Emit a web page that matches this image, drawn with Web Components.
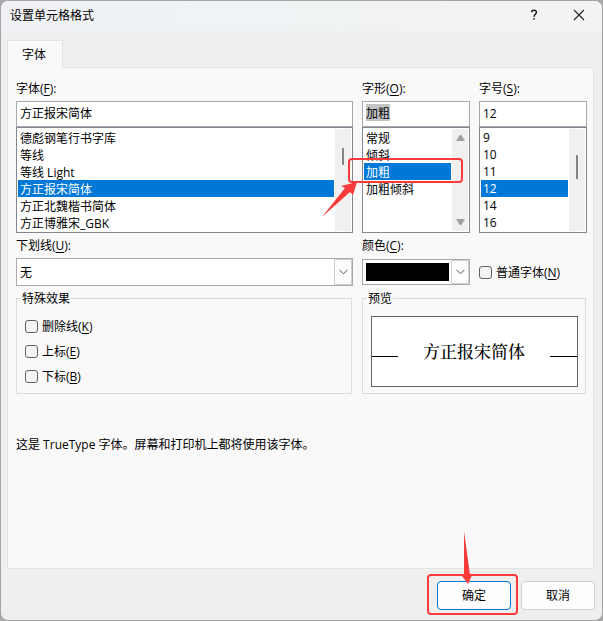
<!DOCTYPE html>
<html lang="zh-CN">
<head>
<meta charset="utf-8">
<title>设置单元格格式</title>
<style>
html, body { margin: 0; height: 100%; }
body { background: #a9a9a9; font: 12px/17px "Open Sans", "Noto Sans CJK SC", sans-serif; color: #000; }
.wide { grid-column: span 2; }
.note { grid-column: 1 / -1; margin: 38px 0 0; }
u { text-underline-offset: 2px; }
</style>
</head>
<body>
<dialog-window heading="设置单元格格式">
  <tab-panel heading="字体">
    <list-field value="方正报宋简体" options="德彪钢笔行书字库|等线|等线 Light|方正报宋简体|方正北魏楷书简体|方正博雅宋_GBK" thumb="19 17">字体(<u>F</u>):</list-field>
    <list-field value="加粗" options="常规|倾斜|加粗|加粗倾斜" arrows highlighted>字形(<u>O</u>):
      <call-out slot="mark" kind="row"></call-out>
    </list-field>
    <list-field value="12" options="9|10|11|12|14|16" thumb="26 24">字号(<u>S</u>):</list-field>
    <combo-field value="无">下划线(<u>U</u>):</combo-field>
    <combo-field value="" swatch>颜色(<u>C</u>):</combo-field>
    <check-field inline>普通字体(<u>N</u>)</check-field>
    <group-box heading="特殊效果">
      <check-field>删除线(<u>K</u>)</check-field>
      <check-field>上标(<u>E</u>)</check-field>
      <check-field>下标(<u>B</u>)</check-field>
    </group-box>
    <group-box heading="预览" class="wide" preview><font-preview>方正报宋简体</font-preview></group-box>
    <p class="note">这是 TrueType 字体。屏幕和打印机上都将使用该字体。</p>
  </tab-panel>
  <push-button slot="actions" primary>确定<call-out slot="mark" kind="button"></call-out></push-button>
  <push-button slot="actions">取消</push-button>
</dialog-window>

<script>
const base = '*{box-sizing:border-box}input,select,button{font:inherit;color:inherit;margin:0}';
function define(name, render, after) {
  customElements.define(name, class extends HTMLElement {
    connectedCallback() {
      if (this.shadowRoot) return;
      const root = this.attachShadow({ mode: 'open' });
      root.innerHTML = '<style>' + base + '</style>' + render(this);
      if (after) after(root, this);
    }
  });
}

define('dialog-window', el => `<style>
:host{display:flex;flex-direction:column;box-sizing:border-box;min-height:100vh;border:1px solid #a3a3a3;border-radius:8px;background:#efefef;overflow:hidden}
header{display:flex;align-items:center;height:30px;padding:0 1px 2px 9px;background:linear-gradient(90deg,#f0f1f5,#eef3f6 35%,#f1f3f2 65%,#f3f3f3)}
h1{flex:1;margin:0;font:inherit}
header button{width:45px;height:28px;padding:0;border:0;background:none;display:grid;place-items:center}
main{flex:1;display:flex;margin:9px 8px 0 6px}
::slotted(tab-panel){flex:1}
footer{display:flex;justify-content:flex-end;gap:10px;padding:12px 7px 10px}
</style>
<header><h1>${el.getAttribute('heading')}</h1>
<button aria-label="帮助"><svg width="10" height="12" viewBox="0 0 10 12" fill="none" stroke="#111" stroke-width="1.4"><path d="M2.6 3.2C2.7 .7 7.4.6 7.4 3.2c0 2-2.4 2.2-2.4 4.6M5 9.2v1.6"/></svg></button>
<button aria-label="关闭"><svg width="12" height="12" viewBox="0 0 12 12" stroke="#222" stroke-width="1.1"><path d="M1 1l10 10M11 1L1 11"/></svg></button></header>
<main><slot></slot></main><footer><slot name="actions"></slot></footer>`);

define('tab-panel', el => `<style>
:host{display:flex;flex-direction:column}
.tab{align-self:flex-start;position:relative;z-index:1;width:56px;height:28px;margin-bottom:-1px;padding:0 2px 0 0;border:1px solid #e3e3e3;border-bottom:0;background:#f9f9f9}
section{flex:1;display:grid;grid-template-columns:minmax(0,1fr) 108px 108px;grid-template-rows:repeat(4,auto);align-content:start;gap:4px 9px;padding:12px 6px 12px 8px;border:1px solid #e3e3e3;background:#f9f9f9}
</style><button class="tab" role="tab" aria-selected="true">${el.getAttribute('heading')}</button><section role="tabpanel"><slot></slot></section>`);

define('list-field', el => {
  const v = el.getAttribute('value');
  const [top, size] = (el.getAttribute('thumb') || '0 0').split(' ');
  const bar = el.hasAttribute('arrows')
    ? '<svg width="9" height="6"><path d="M0 6L3 1Q4.500-1 6 1L9 6z" fill="#a0a0a0"/></svg><svg width="9" height="6"><path d="M0 0L3 5Q4.500 7 6 5L9 0z" fill="#a0a0a0"/></svg>'
    : '<i></i>';
  return `<style>
:host{display:flex;flex-direction:column}
label{margin-bottom:4px}
input{width:100%;height:26px;padding:0 3px 2px;border:1px solid #a8a8af;border-radius:0;background:#fff;outline:0}
:host([highlighted]) input{background:linear-gradient(#c4c4c4,#c4c4c4) 4px 3px/24px 17px no-repeat border-box #fff}
.list{position:relative;display:flex;height:106px;padding:1px;border:1px solid #828790;background:#fff}
select{flex:1;min-width:0;height:102px;padding:0;border:0;border-radius:0;background:#fff;overflow:hidden;scrollbar-width:none;outline:0}
option{height:17px;min-height:17px;padding:0 2px;line-height:17px}
option:checked{background:linear-gradient(#0078d7,#0078d7);-webkit-text-fill-color:#fff}
.bar{display:flex;flex-direction:column;justify-content:space-between;align-items:center;width:16px;margin-left:1px;padding:${el.hasAttribute('arrows') ? '6px 0' : top + 'px 0'};background:#f0f0f0}
i{width:2px;height:${size}px;background:#858585}
</style><label for="v"><slot></slot></label><input id="v" value="${v}">
<div class="list"><select size="6" aria-label="${v}">${el.getAttribute('options').split('|').map(o => `<option${o === v ? ' selected' : ''}>${o}</option>`).join('')}</select><div class="bar">${bar}</div><slot name="mark"></slot></div>`;
}, (root) => {
  root.querySelector('select').addEventListener('change', e => { root.querySelector('input').value = e.target.value; });
});

define('combo-field', el => `<style>
:host{display:flex;flex-direction:column}
label{margin-bottom:4px}
.box{display:grid;grid-template-columns:1fr 18px;height:28px;border:1px solid #a8a8af;background:#fff}
:host([swatch]) .box{height:26px;margin-top:1px}
select{grid-area:1/1/2/3;appearance:none;width:100%;height:100%;padding:0 3px;border:0;border-radius:0;background:none;outline:0}
:host([swatch]) select{background:linear-gradient(#000,#000) no-repeat content-box;padding:3px 20px 3px 3px}
span{grid-area:1/2;display:grid;place-items:center;border:1px solid #cfcfcf;background:#fdfdfd;pointer-events:none}
</style><label for="c"><slot></slot></label><div class="box"><select id="c"><option>${el.getAttribute('value')}</option></select>
<span><svg width="9" height="6" fill="none" stroke="#555"><path d="M.5.8l4 4 4-4"/></svg></span></div>`);

define('check-field', el => `<style>
:host{display:flex;align-items:center}
:host([inline]){align-self:end;height:28px}
label{display:flex;align-items:center;gap:4px;white-space:nowrap}
input{appearance:none;width:13px;height:13px;border:1px solid #626262;border-radius:3px;background:#f3f3f3}
input:checked{background:#0078d7}
</style><label><input type="checkbox"><span><slot></slot></span></label>`);

define('group-box', el => `<style>
:host{display:flex;margin-right:1px}
fieldset{flex:1;min-width:0;height:104px;margin:0;padding:11px 8px 6px;border:1px solid #dcdcdc}
legend{margin-left:-4px;padding:0 1px}
div{display:grid;gap:8px}
:host([preview]) div{display:block}
:host([preview]) fieldset{padding:9px 7px 6px 8px}
</style><fieldset><legend>${el.getAttribute('heading')}</legend><div><slot></slot></div></fieldset>`);

define('font-preview', el => `<style>
:host{display:grid;grid-template-columns:26px 1fr 27px;align-items:center;box-sizing:border-box;height:71px;border:1px solid #646464;background:#fff}
b{text-align:center;font:500 17px/24px "Noto Serif CJK SC","Noto Sans CJK SC",serif;padding-bottom:2px}
i{height:1px;background:#000;margin-top:10px}
</style><i></i><b><slot></slot></b><i></i>`);

define('push-button', el => `<style>
:host{display:block;position:relative}
button{display:block;width:74px;height:29px;padding:0;border:1px solid #d0d0d0;border-radius:4px;background:#fdfdfd}
:host([primary]) button{border-color:#0078d4}
</style><button><slot></slot></button><slot name="mark"></slot>`);

define('call-out', el => el.getAttribute('kind') === 'row' ? `<style>
:host{position:absolute;left:-42px;top:29px;pointer-events:none}svg{display:block}
</style><svg width="146" height="62" fill="none"><rect x="28" y="2" width="113" height="23" rx="3" stroke="#fb3b3b" stroke-width="2"/><path d="M1 60L24 31 20 29 36 25 32 38 29 35z" fill="#fb3b3b"/></svg>` : `<style>
:host{position:absolute;left:-11px;top:-51px;pointer-events:none}svg{display:block}
</style><svg width="94" height="88" fill="none"><rect x="2" y="45" width="89" height="39" rx="3" stroke="#fb3b3b" stroke-width="2"/><path d="M38 1L44 45 46 45 42 54 36 46 38 45z" fill="#fb3b3b"/></svg>`);
</script>
</body>
</html>
